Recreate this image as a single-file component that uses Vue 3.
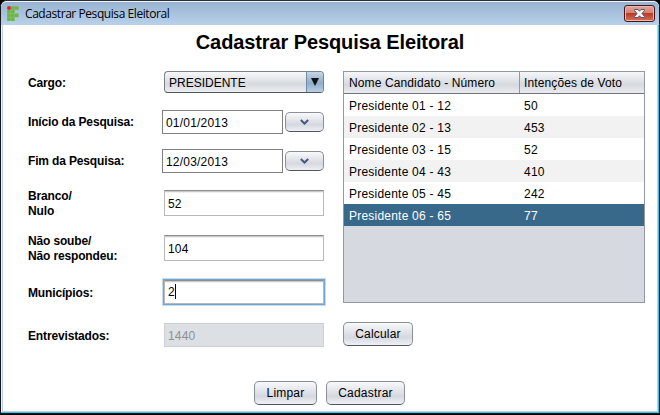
<script setup>
import { ref } from 'vue'

const title = 'Cadastrar Pesquisa Eleitoral'
const candidates = ref([
  { name: 'Presidente 01 - 12', votes: 50 },
  { name: 'Presidente 02 - 13', votes: 453 },
  { name: 'Presidente 03 - 15', votes: 52 },
  { name: 'Presidente 04 - 43', votes: 410 },
  { name: 'Presidente 05 - 45', votes: 242 },
  { name: 'Presidente 06 - 65', votes: 77 },
])
const selected = ref(5)
const dates = [
  { label: 'Início da Pesquisa:', value: '01/01/2013' },
  { label: 'Fim da Pesquisa:', value: '12/03/2013' },
]
</script>

<template>
  <div class="window">
    <header class="titlebar">
      <svg class="logo" width="12" height="15" viewBox="0 0 12 15">
        <g fill="#6fb83c">
          <rect x="4" y="0.2" width="3.7" height="3.6" rx=".4" />
          <rect x="7.900" y="0.2" width="3.7" height="3.6" rx=".4" />
          <rect x="0.1" y="3.900" width="3.7" height="3.6" rx=".4" />
          <rect x="4" y="3.900" width="3.7" height="3.6" rx=".4" />
          <rect x="0.1" y="7.600" width="3.7" height="3.6" rx=".4" />
          <rect x="4" y="7.600" width="3.7" height="3.6" rx=".4" />
          <rect x="7.900" y="7.600" width="3.7" height="3.6" rx=".4" />
          <rect x="0.1" y="11.300" width="3.7" height="3.6" rx=".4" />
          <rect x="4" y="11.300" width="3.7" height="3.6" rx=".4" />
        </g>
        <circle cx="2" cy="2" r="2" fill="#e3202b" />
      </svg>
      <span class="caption">{{ title }}</span>
      <button class="close" aria-label="Fechar">
        <svg width="11" height="9" viewBox="0 0 11 9">
          <path d="M.5 .5H4L5.500 2.200 7 .5H10.500V1.500L8 4.500 10.500 7.500V8.500H7L5.500 6.800 4 8.500H.5V7.500L3 4.500 .5 1.500Z" fill="#f4f4f6" stroke="#58566b" />
        </svg>
      </button>
    </header>

    <main class="content">
      <h1>{{ title }}</h1>
      <div class="columns">
        <form class="form" @submit.prevent>
          <div class="row">
            <label class="lower">Cargo:</label>
            <div class="combo">
              <span>PRESIDENTE</span>
              <i><svg width="8" height="8" viewBox="0 0 8 8"><path d="M0 0H8L4 8Z" fill="#111" /></svg></i>
            </div>
          </div>
          <div v-for="d in dates" :key="d.label" class="row">
            <label>{{ d.label }}</label>
            <div class="date">
              <div class="date-box">{{ d.value }}</div>
              <button class="btn drop">
                <svg width="9" height="6" viewBox="0 0 9 6"><path d="M.8 1L4.500 4.500 8.200 1" fill="none" stroke="#47587f" stroke-width="2" /></svg>
              </button>
            </div>
          </div>
          <div class="row">
            <label class="lower">Branco/<br />Nulo</label>
            <div class="field">52</div>
          </div>
          <div class="row">
            <label class="lower">Não soube/<br />Não respondeu:</label>
            <div class="field">104</div>
          </div>
          <div class="row">
            <label class="lower">Municípios:</label>
            <div class="field focused">2<span class="caret"></span></div>
          </div>
          <div class="row">
            <label class="lower">Entrevistados:</label>
            <div class="field disabled">1440</div>
          </div>
        </form>

        <section class="results">
          <div class="table">
            <div class="tr head"><span>Nome Candidato - Número</span><span>Intenções de Voto</span></div>
            <div
              v-for="(c, i) in candidates"
              :key="c.name"
              class="tr"
              :class="{ odd: i % 2, selected: i === selected }"
            >
              <span>{{ c.name }}</span><span>{{ c.votes }}</span>
            </div>
          </div>
          <button class="btn calc">Calcular</button>
        </section>
      </div>

      <footer class="actions">
        <button class="btn clear">Limpar</button>
        <button class="btn save">Cadastrar</button>
      </footer>
    </main>
  </div>
</template>

<style>
body {
  background: #000;
}
</style>

<style scoped>
* {
  box-sizing: border-box;
}
.window {
  width: 660px;
  height: 414px;
  padding: 0 1px 0 1px;
  border: 1px solid #14161c;
  border-top-color: #2b2b33;
  border-radius: 7px 7px 0 0;
  background: #b9d1ea;
  box-shadow: inset -1px -1px 0 #35c5e4, inset 1px 1px 0 #eef4fb;
  font: 12px/15px "Liberation Sans", Arial, sans-serif;
  color: #000;
}
.titlebar {
  height: 24px;
  margin: 0 -1px;
  padding: 0 4px 0 6px;
  display: flex;
  align-items: center;
  border-top: 1px solid #eef4fb;
  border-radius: 6px 6px 0 0;
  background: linear-gradient(#98b3d1, #b9d1ea);
}
.logo {
  margin-top: -1px;
}
.caption {
  margin-left: 6px;
  flex: 1;
  font: 12px/16px "Open Sans", "Noto Sans", sans-serif;
  letter-spacing: -0.43px;
}
.close {
  width: 31px;
  height: 17px;
  padding: 0;
  display: grid;
  place-items: center;
  border: 1px solid #45151d;
  border-radius: 3px;
  background: linear-gradient(#e2a399, #d78376 45%, #b93c25 50%, #d1715c);
  box-shadow: inset 0 0 0 1px #ecb9ae;
}
.content {
  height: 386px;
  margin: 0 1px;
  background: #fff;
}
h1 {
  margin: 0;
  height: 38px;
  padding-top: 5px;
  text-align: center;
  font-size: 20px;
  line-height: 24px;
  letter-spacing: -0.1px;
}
.columns {
  display: flex;
  padding-left: 25px;
  height: 292px;
}
.form {
  width: 315px;
  display: grid;
  grid-template-rows: 38px 42px 36px 48px 42px 46px 40px;
}
.row {
  display: grid;
  grid-template-columns: 134px 162px;
  align-items: center;
}
label {
  font-weight: bold;
  letter-spacing: -0.15px;
}
.lower {
  padding-top: 2px;
}
.combo {
  margin: 0 0 0 2px;
  width: 160px;
  height: 22px;
  display: flex;
  border: 1px solid #7c8089;
  border-bottom-color: #52565f;
  border-radius: 4px;
  background: linear-gradient(#f8f8fa, #d6d9df 60%, #eceef2);
  line-height: 22px;
  overflow: hidden;
}
.combo span {
  flex: 1;
  padding-left: 4px;
}
.combo i {
  width: 17px;
  display: grid;
  place-items: center;
  border-left: 1px solid #6d8ba6;
  background: linear-gradient(#c5d6e4, #8fadc6 55%, #b7cfe2);
}
.date {
  display: flex;
  align-items: center;
  gap: 2px;
}
.date-box {
  width: 121px;
  height: 24px;
  padding-left: 3px;
  border: 1px solid #7f7f7f;
  line-height: 24px;
  letter-spacing: 0.2px;
}
.btn {
  height: 24px;
  padding: 0;
  border: 1px solid #8b8f98;
  border-bottom-color: #52565f;
  border-radius: 5px;
  background: linear-gradient(#f9f9fb, #d5d8df 65%, #eef0f5);
  font: 12px/22px "Liberation Sans", Arial, sans-serif;
  letter-spacing: 0.2px;
  color: #000;
}
.drop {
  width: 39px;
  height: 20px;
  display: grid;
  place-items: center;
}
.field {
  margin-left: 2px;
  width: 160px;
  height: 26px;
  padding-left: 3px;
  border: 1px solid #b9b9b9;
  border-top-color: #8d8d8d;
  box-shadow: inset 0 1px 0 #c9c9c9, inset 0 2px 0 #f0f0f0;
  line-height: 26px;
  letter-spacing: 0.2px;
}
.focused {
  height: 24px;
  line-height: 23px;
  box-shadow: inset 0 1px 0 #c9c9c9, inset 0 2px 0 #f0f0f0, 0 0 0 1px #73a4d1, 0 0 0 2px #c4dcf0;
}
.caret {
  display: inline-block;
  width: 1px;
  height: 15px;
  vertical-align: -3px;
  background: #000;
}
.disabled {
  height: 24px;
  line-height: 24px;
  border-color: #cdd0d5;
  background: #dce0e5;
  box-shadow: none;
  color: #8e8f91;
}
.results {
  padding-top: 8px;
}
.table {
  width: 302px;
  height: 232px;
  border: 1px solid #9297a1;
  background: #d6d9e0;
}
.tr {
  height: 22px;
  display: grid;
  grid-template-columns: 175px 1fr;
  line-height: 24px;
  letter-spacing: 0.22px;
  background: #fff;
}
.tr span {
  padding-left: 5px;
}
.head {
  border-bottom: 1px solid #70747e;
  background: linear-gradient(#f6f7f9, #d6d9df 60%, #e9ebf0);
  line-height: 22px;
  letter-spacing: 0.12px;
}
.head span + span {
  height: 21px;
  padding-left: 4px;
  border-left: 1px solid #9297a1;
}
.odd {
  background: #f2f2f2;
}
.selected {
  background: #39698a;
  color: #fff;
}
.calc {
  display: block;
  width: 70px;
  margin-top: 19px;
}
.actions {
  display: flex;
  gap: 9px;
  padding: 26px 0 0 251px;
}
.clear {
  width: 63px;
}
.save {
  width: 79px;
}
</style>
